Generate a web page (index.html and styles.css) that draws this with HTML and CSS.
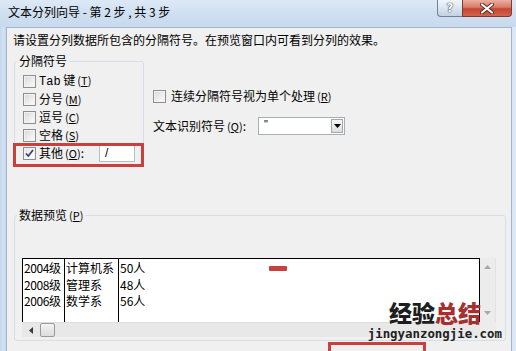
FILE: index.html
```html
<!DOCTYPE html>
<html lang="zh-CN">
<head>
<meta charset="utf-8">
<title>文本分列向导</title>
<link rel="stylesheet" href="styles.css">
</head>
<body>
<div class="window">
  <div class="titlebar">
    <span class="title">文本分列向导 - 第 2 步 , 共 3 步</span>
    <div class="caption-btns">
      <span class="btn-help">?</span>
      <span class="btn-close"><svg width="14" height="11" viewBox="0 0 14 11"><path d="M2 1.5 L12 9.5 M12 1.5 L2 9.5" stroke="#5a2a24" stroke-width="4" stroke-linecap="round"/><path d="M2 1.5 L12 9.5 M12 1.5 L2 9.5" stroke="#fff" stroke-width="2.2" stroke-linecap="round"/></svg></span>
    </div>
  </div>
  <div class="client">
    <p class="intro">请设置分列数据所包含的分隔符号。在预览窗口内可看到分列的效果。</p>
    <div class="top-row">
      <fieldset class="delims">
        <legend>分隔符号</legend>
        <div class="chk"><span class="box"></span><span class="lbl"><span class="mono">Tab</span> 键<span class="mn">(<u>T</u>)</span></span></div>
        <div class="chk"><span class="box"></span><span class="lbl">分号<span class="mn">(<u>M</u>)</span></span></div>
        <div class="chk"><span class="box"></span><span class="lbl">逗号<span class="mn">(<u>C</u>)</span></span></div>
        <div class="chk"><span class="box"></span><span class="lbl">空格<span class="mn">(<u>S</u>)</span></span></div>
        <div class="chk chk-other"><span class="box checked"><svg width="11" height="11" viewBox="0 0 11 11"><path d="M2 5.5 L4.3 8 L9 2" fill="none" stroke="#2b3f75" stroke-width="1.6"/></svg></span><span class="lbl">其他<span class="mn">(<u>O</u>)</span>:</span><span class="other-input">/</span></div>
      </fieldset>
      <div class="options">
        <div class="chk opt-check"><span class="box"></span><span class="lbl">连续分隔符号视为单个处理<span class="mn">(<u>R</u>)</span></span></div>
        <div class="qualifier">
          <span class="q-label">文本识别符号<span class="mn">(<u>Q</u>)</span>:</span>
          <div class="combo"><span class="combo-val">"</span><span class="combo-btn"><svg width="7" height="4" viewBox="0 0 7 4"><path d="M0 0 H7 L3.5 4 Z" fill="#000"/></svg></span></div>
        </div>
      </div>
    </div>
    <fieldset class="preview-group">
      <legend>数据预览<span class="mn">(<u>P</u>)</span></legend>
      <div class="preview">
        <div class="pv-main">
          <div class="pv-data">
            <div class="col c1"><div>2004级</div><div>2008级</div><div>2006级</div></div>
            <div class="col c2"><div>计算机系</div><div>管理系</div><div>数学系</div></div>
            <div class="col c3"><div>50人</div><div>48人</div><div>56人</div></div>
          </div>
          <div class="vscroll">
            <svg width="7" height="4" viewBox="0 0 7 4"><path d="M0 4 H7 L3.5 0 Z" fill="#a8a8a8"/></svg>
            <svg width="7" height="4" viewBox="0 0 7 4"><path d="M0 0 H7 L3.5 4 Z" fill="#a8a8a8"/></svg>
          </div>
        </div>
        <div class="pv-h">
          <div class="hscroll">
            <svg width="4" height="7" viewBox="0 0 4 7"><path d="M4 0 V7 L0 3.5 Z" fill="#3a3a3a"/></svg>
            <span class="thumb"></span>
          </div>
          <div class="corner"></div>
        </div>
      </div>
    </fieldset>
  </div>
  <div class="mark mark-other"></div>
  <div class="mark mark-bottom"></div>
  <div class="mark-dash"></div>
  <div class="watermark">
    <div class="wm-cn"><span class="wm-dark">经验</span><span class="wm-red">总结</span></div>
    <div class="wm-url">jingyanzongjie.com</div>
  </div>
</div>
</body>
</html>
```
FILE: styles.css
```css
* { box-sizing: border-box; }
html, body { margin: 0; padding: 0; }
body {
  width: 516px;
  height: 351px;
  overflow: hidden;
  font-family: "Noto Sans CJK SC", "Liberation Sans", sans-serif;
  font-size: 12px;
  color: #000;
  background: #c9dbef;
}
.window {
  position: relative;
  width: 516px;
  height: 351px;
  display: flex;
  flex-direction: column;
  background: linear-gradient(90deg, #c3d7ee 0, #d3e2f3 3px, #c6d9ef 6px, #c6d9ef 510px, #dce8f5 513px);
}
.titlebar {
  height: 27px;
  display: flex;
  justify-content: space-between;
  align-items: flex-start;
  padding-left: 8px;
  background: linear-gradient(#dde9f6, #cfdff1 14px, #c8daef);
}
.title { line-height: 24px; font-size: 12px; }
.caption-btns { display: flex; margin-right: 4px; }
.btn-help {
  width: 25px;
  height: 17px;
  border: 1px solid #6f809a;
  border-top: none;
  border-right: none;
  border-radius: 0 0 0 4px;
  background: linear-gradient(#f1f5fa, #dbe5ef 50%, #c3d1e2);
  display: flex;
  align-items: center;
  justify-content: center;
  font-family: "DejaVu Sans", sans-serif;
  font-size: 12px;
  font-weight: bold;
  color: #fff;
  line-height: 1;
  text-shadow: 0 0 1px #3c4a60, 0 0 1px #3c4a60, 0 0 1px #3c4a60;
}
.btn-close {
  width: 50px;
  height: 17px;
  border: 1px solid #7b3a32;
  border-top: none;
  border-radius: 0 0 4px 0;
  background: linear-gradient(#eab0a3, #db7a67 45%, #c4452f 55%, #d26450);
  display: flex;
  align-items: center;
  justify-content: center;
}
.client {
  flex: 1;
  margin: 0 4px 0 6px;
  background: #f0f0f0;
  border: 1px solid #a5b4c8;
  border-bottom: none;
  padding: 4px 0 0 6px;
}
.intro { margin: 0; line-height: 16px; }
.top-row { display: flex; margin-top: 5px; }
fieldset {
  margin: 0;
  padding: 0;
  border: 1px solid #d5dfe5;
  border-radius: 3px;
  min-width: 0;
}
legend { padding: 0 2px; margin-left: 2px; line-height: 16px; }
.delims { width: 130px; margin-left: 1px; padding: 3px 0 3px 0; }
.chk { display: flex; align-items: center; height: 18px; padding-left: 8px; }
.box {
  width: 13px;
  height: 13px;
  flex: none;
  border: 1px solid #8e8f8f;
  background: linear-gradient(135deg, #d8d8d8, #f6f6f6 80%);
  box-shadow: inset 0 0 0 1px #f2f2f2;
  margin-right: 3px;
  display: flex;
  align-items: center;
  justify-content: center;
}
.box.checked { background: linear-gradient(135deg, #e2e2e2, #fafafa 80%); }
.lbl { line-height: 16px; white-space: nowrap; }
.mono { font-family: "Liberation Mono", monospace; font-size: 12px; }
.mn { margin-left: 2px; font-size: 11px; }
.mn u { text-underline-offset: 1px; }
.chk-other { height: 18px; }
.other-input {
  width: 36px;
  height: 18px;
  margin-left: 15px;
  background: #fff;
  border: 1px solid #b8bcc3;
  border-top-color: #a3a7ad;
  padding-left: 5px;
  line-height: 16px;
  font-family: "Liberation Sans", sans-serif;
}
.options { margin-left: 9px; padding-top: 34px; }
.opt-check { padding-left: 0; }
.opt-check .box { margin-right: 5px; }
.qualifier { display: flex; align-items: center; height: 18px; margin-top: 12px; }
.q-label { width: 105px; line-height: 16px; white-space: nowrap; }
.combo {
  width: 87px;
  height: 18px;
  display: flex;
  justify-content: space-between;
  background: #fff;
  border: 1px solid #a9aeb5;
}
.combo-val { padding-left: 5px; line-height: 12px; font-size: 11px; font-family: "Liberation Sans", sans-serif; }
.combo-btn {
  width: 12px;
  height: 14px;
  margin: 1px;
  border: 1px solid #a7a7a7;
  background: linear-gradient(#f6f6f6, #dedede);
  display: flex;
  align-items: center;
  justify-content: center;
}
.preview-group {
  width: 492px;
  height: 134px;
  margin: 41px 0 0 1px;
  padding: 35px 0 0 7px;
}
.preview-group legend { margin-left: -5px; }
.preview { width: 474px; }
.pv-main { display: flex; height: 64px; }
.pv-data {
  width: 458px;
  display: flex;
  background: #fff;
  border-top: 1px solid #000;
  border-right: 1px solid #000;
}
.col { border-left: 1px solid #000; padding: 1px 0 0 1px; line-height: 16.5px; white-space: nowrap; }
.c1 { width: 42px; letter-spacing: -0.4px; }
.c2 { width: 54px; }
.c3 { flex: 1; }
.vscroll {
  width: 16px;
  background: #ececec;
  border-right: 1px solid #e2e2e2;
  display: flex;
  flex-direction: column;
  justify-content: space-between;
  align-items: center;
  padding: 7px 0 7px;
}
.pv-h { display: flex; height: 15px; }
.hscroll {
  width: 458px;
  display: flex;
  align-items: center;
  padding-left: 7px;
  background: #e8e8e8;
  border-top: 1px solid #dedede;
}
.thumb {
  width: 15px;
  height: 14px;
  margin-left: 7px;
  border: 1px solid #9a9a9a;
  border-radius: 2px;
  background: linear-gradient(#f4f4f4, #dcdcdc);
}
.corner { width: 16px; background: #ececec; }
.mark {
  position: absolute;
  border: 3px solid #c9413f;
}
.mark-other { left: 13px; top: 143px; width: 131px; height: 24px; }
.mark-bottom { left: 328px; top: 342px; width: 98px; height: 20px; }
.mark-dash {
  position: absolute;
  left: 269px;
  top: 266px;
  width: 18px;
  height: 5px;
  border-radius: 1px;
  background: #c9413f;
}
.watermark {
  position: absolute;
  left: 366px;
  top: 298px;
  width: 136px;
  display: flex;
  flex-direction: column;
  align-items: flex-end;
}
.wm-cn {
  font-family: "Noto Sans CJK SC", sans-serif;
  font-weight: 900;
  font-size: 23px;
  line-height: 28px;
  margin-right: 21px;
  letter-spacing: 0;
}
.wm-dark { color: #1e1e1e; }
.wm-red { color: #a5302f; }
.wm-url {
  font-family: "DejaVu Sans Mono", monospace;
  font-weight: bold;
  font-size: 12.4px;
  line-height: 14px;
  color: #222;
  margin-top: 1px;
}
```
